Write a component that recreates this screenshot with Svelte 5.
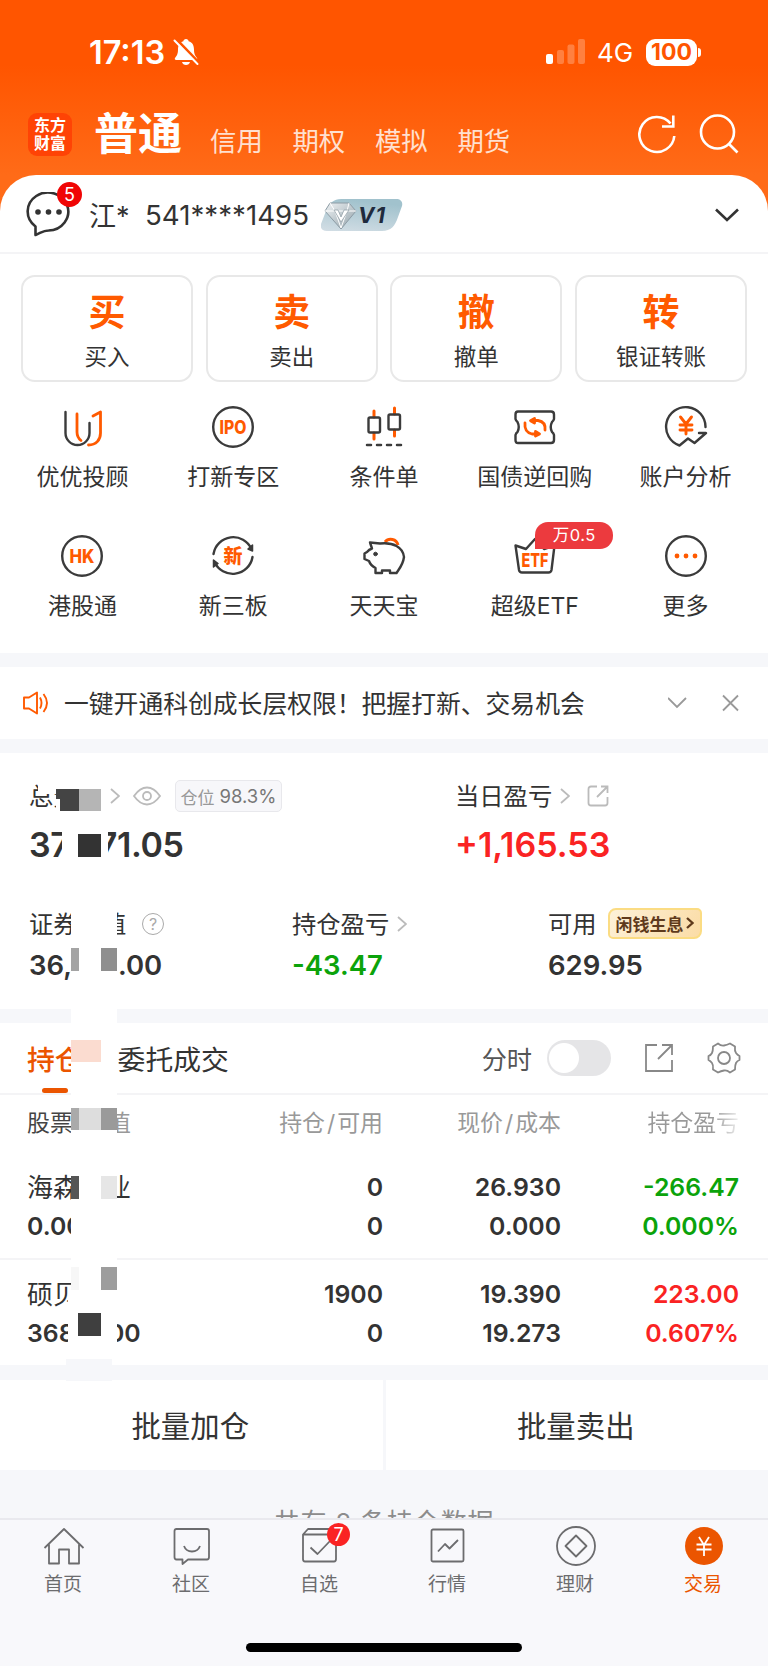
<script>
  let accountTabs = ["信用", "期权", "模拟", "期货"];

  let actions = [
    { mark: "买", name: "买入" },
    { mark: "卖", name: "卖出" },
    { mark: "撤", name: "撤单" },
    { mark: "转", name: "银证转账" },
  ];

  let tools = [
    { icon: "uu", name: "优优投顾" },
    { icon: "ipo", name: "打新专区" },
    { icon: "candle", name: "条件单" },
    { icon: "bond", name: "国债逆回购" },
    { icon: "analysis", name: "账户分析" },
    { icon: "hk", name: "港股通" },
    { icon: "new", name: "新三板" },
    { icon: "pig", name: "天天宝" },
    { icon: "etf", name: "超级ETF", tag: "万0.5" },
    { icon: "more", name: "更多" },
  ];

  let stocks = [
    {
      name: "海森药业",
      value: "0.00",
      hold: "0",
      usable: "0",
      price: "26.930",
      cost: "0.000",
      profit: "-266.47",
      rate: "0.000%",
      trend: "down",
    },
    {
      name: "硕贝德",
      value: "36841.00",
      hold: "1900",
      usable: "0",
      price: "19.390",
      cost: "19.273",
      profit: "223.00",
      rate: "0.607%",
      trend: "up",
    },
  ];

  let navs = [
    { icon: "home", name: "首页" },
    { icon: "chat", name: "社区" },
    { icon: "pick", name: "自选", badge: 7 },
    { icon: "market", name: "行情" },
    { icon: "wealth", name: "理财" },
    { icon: "trade", name: "交易", active: true },
  ];

  // privacy mask: x, y, width, height, colour
  let patches = [
    [38, 753, 63, 36, "#fff"],
    [38, 788, 18, 6, "#fff"],
    [56, 789, 23, 22, "#444"],
    [56, 799, 4, 12, "#fff"],
    [79, 789, 22, 22, "#b5b5b5"],
    [62, 816, 46, 62, "#fff"],
    [78, 834, 23, 23, "#333"],
    [71, 902, 46, 104, "#fff"],
    [71, 948, 8, 23, "#a4a4a4"],
    [101, 948, 16, 23, "#8f8f8f"],
    [71, 1006, 46, 353, "#fff"],
    [71, 1040, 30, 22, "#fbdcd0"],
    [71, 1108, 8, 22, "#aaa"],
    [79, 1108, 22, 22, "#ddd"],
    [101, 1108, 16, 22, "#9a9a9a"],
    [71, 1176, 8, 23, "#555"],
    [101, 1176, 16, 23, "#e6e6e6"],
    [71, 1267, 8, 23, "#f7f7f7"],
    [101, 1267, 16, 23, "#9d9d9d"],
    [68, 1300, 46, 59, "#fff"],
    [78, 1313, 23, 23, "#3f3f3f"],
    [66, 1359, 46, 22, "#f6f7fa"],
  ];
</script>

<div class="phone">
  <header>
    <div class="status">
      <span class="time">17:13</span>
      <svg class="bell" width="26" height="28" viewBox="0 0 26 28">
        <path d="M13 1c1.600 0 2.400 1 2.600 2.200 4 1 5.400 4.300 5.400 8.300 0 5 1.500 6.500 3 8.500.6 1-.1 2-1.200 2H3.200C2.100 22 1.400 21 2 20c1.500-2 3-3.500 3-8.500 0-4 1.400-7.300 5.400-8.300C10.600 2 11.400 1 13 1z" fill="#fff" />
        <path d="M9 24h8c-.5 2-2 3-4 3s-3.500-1-4-3z" fill="#fff" />
        <path d="M3.500 1.500 25.500 24.500" stroke="#ff5500" stroke-width="3" />
        <path d="M1.500 2.500 24.500 26" stroke="#fff" stroke-width="2" stroke-linecap="round" />
      </svg>
      <svg class="signal" width="40" height="26" viewBox="0 0 40 26" fill="#fff">
        <rect x="0" y="15" width="7" height="10" rx="2" />
        <g opacity=".25">
          <rect x="11" y="11" width="7" height="14" rx="2" />
          <rect x="21.500" y="5.500" width="7" height="19.500" rx="2" />
          <rect x="32" y="0" width="7" height="25" rx="2" />
        </g>
      </svg>
      <span class="net">4G</span>
      <span class="battery">100</span>
      <i class="nub"></i>
    </div>

    <div class="titlebar">
      <div class="logo"><span>东方</span><span>财富</span></div>
      <h1>普通</h1>
      <nav>
        {#each accountTabs as tab}
          <span>{tab}</span>
        {/each}
      </nav>
      <svg width="102" height="42" viewBox="0 0 102 42" fill="none" stroke="#fff" stroke-width="2.600">
        <path d="M32.500 10.500A17.500 17.500 0 1 0 36.300 23" />
        <path d="M35.300 2.500V13.500H24" />
        <circle cx="79.500" cy="19" r="16.500" />
        <path d="M91 31l8.500 8.500" />
      </svg>
    </div>
  </header>

  <section class="account">
    <div class="msg">
      <svg width="46" height="46" viewBox="0 0 46 46" fill="none" stroke="#333" stroke-width="2.600" stroke-linejoin="round">
        <path d="M9.500 43V34.500A20.300 19 0 1 1 22.500 38.500C17.500 38.500 15.500 40.500 9.500 43z" />
        <g fill="#333" stroke="none">
          <circle cx="12" cy="20" r="2.800" /><circle cx="22.500" cy="20" r="2.800" /><circle cx="33" cy="20" r="2.800" />
        </g>
      </svg>
      <span class="count">5</span>
    </div>
    <span class="user">江*</span>
    <span class="number">541****1495</span>
    <svg class="vip" width="82" height="32" viewBox="0 0 82 32">
      <defs>
        <linearGradient id="vip" x1="0" y1="1" x2=".3" y2="0">
          <stop offset="0" stop-color="#d3dee5" /><stop offset="1" stop-color="#a1c2cd" />
        </linearGradient>
        <linearGradient id="gem" x1="0" y1="0" x2="1" y2="1">
          <stop offset="0" stop-color="#edf1f3" /><stop offset="1" stop-color="#93a2aa" />
        </linearGradient>
      </defs>
      <path d="M20 0h55c5 0 7 3 6 7l-4 11c-3 9-7 14-16 14H6c-5 0-7-3-6-7L5 12C8 4 13 0 20 0z" fill="url(#vip)" />
      <path d="M9 4h19l7 8-15 18L4 12z" fill="url(#gem)" stroke="#8d9ca5" />
      <path d="M4 12h31M9 4l5 8 6 17 6-17 2-8" fill="none" stroke="#fff" />
      <path d="M13 11h4l3 7 3-7h5l-8 12z" fill="#fff" stroke="#95a2aa" stroke-width=".8" />
      <text x="37" y="24" font-size="22" font-weight="700" font-style="italic" textLength="27" fill="#1f2b3d">V1</text>
    </svg>
    <svg class="down" width="24" height="14" viewBox="0 0 24 14" fill="none" stroke="#333" stroke-width="2.600">
      <path d="M1 1.500 12 12 23 1.500" />
    </svg>
  </section>

  <section class="actions">
    {#each actions as action}
      <button><b>{action.mark}</b><span>{action.name}</span></button>
    {/each}
  </section>

  <section class="tools">
    {#each tools as tool}
      <div class="tool">
        <svg width="44" height="44" viewBox="0 0 44 44" fill="none" stroke="#3b3b3b" stroke-width="2.400" stroke-linecap="round" stroke-linejoin="round">
          {#if tool.icon == "uu"}
            <path d="M5.500 7V28A12 12 0 0 0 29.500 28V18" />
            <g stroke="#ff5a00" stroke-width="2.800"><path d="M17 9V27C17 31 18.500 33.500 21 35.500" /><path d="M33 11 40.500 7V28C40.500 35 36 40 28.500 40" /></g>
          {:else if tool.icon == "ipo"}
            <circle cx="22" cy="22" r="19.800" />
            <text x="22" y="28.800" class="mark" font-size="18.500" textLength="27" lengthAdjust="spacingAndGlyphs">IPO</text>
          {:else if tool.icon == "candle"}
            <path d="M12 6V12M12 28V34M32.500 3V9M32.500 25V31" stroke="#ff5a00" stroke-width="3" />
            <rect x="6.500" y="12.500" width="11.500" height="15" rx="1.500" /><rect x="26.500" y="9.500" width="11.500" height="15" rx="1.500" />
            <path d="M5 40h4M15 40h4M25 40h4M35 40h4" stroke-width="2.500" />
          {:else if tool.icon == "bond"}
            <path d="M5 6.500H38Q41 6.500 41 9.500V14Q40.500 16 39 17Q36.500 22 39 27Q40.500 28 41 30V35Q41 38 38 38H5Q2.500 38 2.500 35V30Q3 28 4.500 27Q7 22 4.500 17Q3 16 2.500 14V9.500Q2.500 6.500 5 6.500z" />
            <g stroke="#ff5a00" stroke-width="2.800"><path d="M20 15.500H25Q33 17 32 25M24 29H19Q11 27 12 18" /><path d="M21.500 13.500 17.500 15.700 21.500 18zM22.500 26.500 26.500 29 22.500 31z" fill="#ff5a00" /></g>
          {:else if tool.icon == "analysis"}
            <path d="M41.500 22A19.700 19.700 0 1 0 15.500 40.500L24 33.500 30.500 38 42 28H35" />
            <path d="M16.500 12 22 19 27.500 12M16 20H28M16 25H28M22 19V29" stroke="#ff5a00" stroke-width="2.900" />
          {:else if tool.icon == "hk"}
            <circle cx="22" cy="22" r="19.800" />
            <text x="22" y="28.500" class="mark" font-size="18.500" textLength="25" lengthAdjust="spacingAndGlyphs">HK</text>
          {:else if tool.icon == "new"}
            <path d="M2.500 20A20 20 0 0 1 40.500 15M41.500 23A20 20 0 0 1 3.500 28" />
            <path d="M41.500 11V17L37 15zM2.500 33V26L7 29.500z" fill="#3b3b3b" stroke-width="1.500" />
            <text x="22" y="28.500" class="mark" font-size="19">新</text>
          {:else if tool.icon == "pig"}
            <path d="M23 8A7.500 7.500 0 0 1 36 11" stroke="#ff5a00" stroke-width="3" stroke-linecap="butt" />
            <path d="M8 8.500 18 9.500C31 8 41 13 42 23 41 31 37 35 34.500 39H28V36.500H20V39H13.500V34C10 32 8 30 7 27L2.500 25V19.500L5 18Q7 15.500 10 14.500z" />
            <circle cx="13.500" cy="20" r="1.800" fill="#3b3b3b" stroke-width="1" />
          {:else if tool.icon == "etf"}
            <path d="M2.500 11.500 13 15 22 5 31 15 41.500 11.500 38.500 36Q38 38.500 35.500 38.500H9Q6.500 38.500 6 36z" />
            <text x="22" y="33" class="mark" font-size="19" textLength="27" lengthAdjust="spacingAndGlyphs">ETF</text>
          {:else}
            <circle cx="22" cy="22" r="19.800" />
            <path d="M13 22h.01M22 22h.01M31 22h.01" stroke="#ff5a00" stroke-width="4.800" />
          {/if}
        </svg>
        <span>{tool.name}</span>
        {#if tool.tag}<em>{tool.tag}</em>{/if}
      </div>
    {/each}
  </section>

  <section class="notice">
    <svg width="26" height="24" viewBox="0 0 26 24" fill="none" stroke="#ff5a00" stroke-width="1.900" stroke-linejoin="round">
      <path d="M1 6.500H6L14 1.500V22.500L6 17.500H1zM17 6.500Q20 12 17 17.500M20.500 3Q27.500 12 20.500 21" />
    </svg>
    <p>一键开通科创成长层权限！把握打新、交易机会</p>
    <svg class="fold" width="72" height="18" viewBox="0 0 72 18" fill="none" stroke="#999" stroke-width="1.800">
      <path d="M0 4 9 13 18 4M55 1.500 70 16.500M70 1.500 55 16.500" />
    </svg>
  </section>

  <section class="assets">
    <div class="total">
      <div>
        <div class="label">
          <span>总资产</span>
          <svg class="arrow" width="10" height="16" viewBox="0 0 10 16"><path d="M1 1 9 8 1 15" /></svg>
          <svg class="eye" width="28" height="20" viewBox="0 0 28 20"><path d="M1 10Q7 1.500 14 1.500T27 10Q21 18.500 14 18.500T1 10z" /><circle cx="14" cy="10" r="4" /></svg>
          <span class="pill">仓位 <i>98.3%</i></span>
        </div>
        <strong class="sum">37,471.05</strong>
      </div>
      <div>
        <div class="label">
          <span>当日盈亏</span>
          <svg class="arrow" width="10" height="16" viewBox="0 0 10 16"><path d="M1 1 9 8 1 15" /></svg>
          <svg class="out" width="22" height="22" viewBox="0 0 22 22"><path d="M10 1.500H4Q1.500 1.500 1.500 4V18Q1.500 20.500 4 20.500H18Q20.500 20.500 20.500 18V12M14 1.500H20.500V8M20 2 10 12" /></svg>
        </div>
        <strong class="up">+1,165.53</strong>
      </div>
    </div>
    <div class="detail">
      <div>
        <div class="label">
          <span>证券市值</span>
          <i class="help">?</i>
        </div>
        <strong>36,841.00</strong>
      </div>
      <div>
        <div class="label">
          <span>持仓盈亏</span>
          <svg class="arrow" width="10" height="16" viewBox="0 0 10 16"><path d="M1 1 9 8 1 15" /></svg>
        </div>
        <strong class="down">-43.47</strong>
      </div>
      <div>
        <div class="label"><span>可用</span><span class="interest">闲钱生息<svg width="8" height="12" viewBox="0 0 8 12"><path d="M1 1 6.500 6 1 11" /></svg></span></div>
        <strong>629.95</strong>
      </div>
    </div>
  </section>

  <section class="positions">
    <div class="tabs">
      <span class="active">持仓</span>
      <span>委托成交</span>
      <span class="minute">分时</span>
      <i class="switch"></i>
      <svg class="share" width="30" height="30" viewBox="0 0 30 30" fill="none" stroke="#888" stroke-width="1.800">
        <path d="M13 2H2V28H28V17M18 2H28V12M28 2 14 16" />
      </svg>
      <svg class="gear" width="34" height="34" viewBox="0 0 34 34" fill="none" stroke="#888" stroke-width="1.800" stroke-linejoin="round">
        <path d="M11 2.500Q14 5 17 4.500T23 2.500L28 5.500Q27.500 10 29 12T32.500 15V19Q30 20 29 22T28 28.500L23 31.500Q20 29 17 29.500T11 31.500L6 28.500Q6.500 24 5 22T1.500 19V15Q4 14 5 12T6 5.500z" />
        <circle cx="17" cy="17" r="6" />
      </svg>
    </div>
    <div class="row head">
      <span><b>股票</b><i>/</i>市值</span>
      <span>持仓<i>/</i>可用</span>
      <span>现价<i>/</i>成本</span>
      <span class="fade">持仓盈亏</span>
    </div>
    {#each stocks as stock}
      <div class="row stock">
        <div><span class="name">{stock.name}</span><span>{stock.value}</span></div>
        <div><span>{stock.hold}</span><span>{stock.usable}</span></div>
        <div><span>{stock.price}</span><span>{stock.cost}</span></div>
        <div class={stock.trend}><span>{stock.profit}</span><span>{stock.rate}</span></div>
      </div>
    {/each}
  </section>

  <section class="batch">
    <button>批量加仓</button>
    <button>批量卖出</button>
  </section>

  <div class="summary">共有 2 条持仓数据</div>

  <footer>
    <nav>
      {#each navs as nav}
        <div class="nav" class:active={nav.active}>
          <svg width="42" height="42" viewBox="0 0 42 42" fill="none" stroke="#6c6c6e" stroke-width="1.800" stroke-linejoin="round">
            {#if nav.icon == "home"}
              <path d="M1.500 23 21 4 40.500 23M6 19.500V38.500H16V24.500H26V38.500H36V19.500" />
            {:else if nav.icon == "chat"}
              <path d="M5.500 4H36Q38 4 38 6V32Q38 34.500 36 34.500H17L11.500 39V34.500H5.500Q3.500 34.500 3.500 32V6Q3.500 4 5.500 4zM13 21Q15 26.500 21 26.500T29 21" />
            {:else if nav.icon == "pick"}
              <path d="M4 9.500 9 4H34L37 9.500V34Q37 36.500 35 36.500H6Q4 36.500 4 34zM4 9.500H37M11.500 22.500 18.500 29 31 16" />
            {:else if nav.icon == "market"}
              <rect x="4.500" y="4.500" width="32" height="32" rx="1.500" /><path d="M11 26.500 18 19 22.500 23.500 31 15" />
            {:else if nav.icon == "wealth"}
              <circle cx="21" cy="21" r="19" /><path d="M21 10.500 31.500 21 21 31.500 10.500 21z" />
            {:else}
              <circle cx="21" cy="21" r="19" fill="#eb5500" stroke="none" />
              <path d="M16 12 21 20 26 12M13.500 19.500H28.500M13.500 24.500H28.500M21 20V31" stroke="#fff" stroke-width="1.800" />
            {/if}
          </svg>
          <span>{nav.name}</span>
          {#if nav.badge}<em>{nav.badge}</em>{/if}
        </div>
      {/each}
    </nav>
    <i class="home-bar"></i>
  </footer>

  <svg class="mask" width="768" height="1666" viewBox="0 0 768 1666" shape-rendering="crispEdges">
    {#each patches as [x, y, width, height, fill]}
      <rect {x} {y} {width} {height} {fill} />
    {/each}
  </svg>
</div>

<style>
  :global(body) {
    background: #f6f7fa;
  }
  .phone {
    position: relative;
    width: 768px;
    height: 1666px;
    overflow: hidden;
    display: flex;
    flex-direction: column;
    background: #f6f7fa;
    color: #333;
    font-family: Inter, "Noto Sans CJK SC", sans-serif;
  }
  .phone > * {
    box-sizing: border-box;
    flex-shrink: 0;
  }
  h1,
  p {
    margin: 0;
  }
  i,
  em {
    font-style: normal;
  }
  svg {
    display: block;
    flex-shrink: 0;
  }
  button {
    padding: 0;
    color: inherit;
    font-family: inherit;
    background: #fff;
    border: none;
  }

  header {
    height: 215px;
    color: #fff;
    background: linear-gradient(#ff5500 0, #ff5500 65px, #ff6b18 175px);
  }
  .status {
    display: flex;
    align-items: center;
    height: 104px;
    padding: 0 67px 0 89px;
    box-sizing: border-box;
  }
  .time {
    width: 84px;
    font-size: 32.500px;
    font-weight: 600;
  }
  .signal {
    margin-left: auto;
  }
  .net {
    margin: 1px 0 0 11px;
    width: 49px;
    font-size: 26px;
  }
  .battery {
    width: 51px;
    height: 27px;
    border-radius: 9px;
    background: #fff;
    color: #ff5500;
    font-size: 23px;
    line-height: 27px;
    font-weight: 700;
    text-align: center;
  }
  .nub {
    width: 3px;
    height: 9px;
    margin-left: 1px;
    border-radius: 0 4px 4px 0;
    background: #fff;
  }
  .titlebar {
    display: flex;
    align-items: center;
    height: 60px;
    padding: 0 28px;
  }
  .logo {
    display: flex;
    flex-direction: column;
    justify-content: center;
    width: 44px;
    height: 43px;
    border-radius: 9px;
    background: #ff4305;
    font-size: 16px;
    line-height: 18px;
    font-weight: 700;
    text-align: center;
  }
  h1 {
    margin: -1px 0 0 22px;
    font-size: 44px;
    line-height: 60px;
    font-weight: 700;
  }
  .titlebar nav {
    display: flex;
    gap: 29.700px;
    margin: 13px auto 0 28px;
    font-size: 26.400px;
    line-height: 30px;
    color: #ffe0d0;
  }

  .account {
    display: flex;
    align-items: center;
    height: 79px;
    margin-top: -40px;
    padding: 2px 29px 0 26px;
    border-bottom: 2px solid #f4f4f6;
    border-radius: 36px 36px 0 0;
    background: #fff;
  }
  .msg {
    position: relative;
    width: 63px;
  }
  .count {
    position: absolute;
    left: 31px;
    top: -10px;
    width: 25px;
    height: 25px;
    border-radius: 50%;
    background: #f00505;
    color: #fff;
    font-size: 18px;
    line-height: 25px;
    text-align: center;
  }
  .user,
  .number {
    font-size: 27.700px;
    white-space: nowrap;
  }
  .user {
    width: 40px;
    font-size: 27px;
  }
  .number {
    margin: 0 12px 0 16px;
  }
  .account .down {
    margin-left: auto;
  }

  .actions {
    display: grid;
    grid-template-columns: repeat(4, 1fr);
    gap: 12.500px;
    padding: 21px 21px 0;
    height: 128px;
    background: #fff;
  }
  .actions button {
    display: flex;
    flex-direction: column;
    align-items: center;
    border: 2px solid #e8e8e8;
    border-radius: 14px;
  }
  .actions b {
    margin-top: 11px;
    color: #ff5a00;
    font-size: 37px;
    line-height: 50px;
    font-weight: 700;
  }
  .actions span {
    margin-top: 4px;
    font-size: 22.500px;
    line-height: 30px;
  }

  .tools {
    display: grid;
    grid-template-columns: repeat(5, 1fr);
    grid-auto-rows: 129px;
    height: 271px;
    padding: 23px 7px 0;
    background: #fff;
  }
  .tool {
    position: relative;
    display: flex;
    flex-direction: column;
    align-items: center;
  }
  .tool span {
    margin-top: 12px;
    font-size: 23px;
    line-height: 32px;
    white-space: nowrap;
  }
  .mark {
    fill: #ff5a00;
    stroke: none;
    font-weight: 800;
    text-anchor: middle;
  }
  .tool em {
    position: absolute;
    left: 76px;
    top: -12px;
    width: 78px;
    height: 27px;
    border-radius: 13px 13px 13px 0;
    background: #ec3a3e;
    color: #fff;
    font-size: 16.500px;
    line-height: 27px;
    text-align: center;
    letter-spacing: 0.500px;
  }

  .notice {
    display: flex;
    align-items: center;
    height: 72px;
    margin-top: 14px;
    padding: 0 28px 0 23px;
    background: #fff;
  }
  .notice p {
    margin: -3px 0 0 15px;
    font-size: 24.800px;
  }
  .fold {
    margin-left: auto;
  }

  .assets {
    height: 256px;
    margin-top: 14px;
    padding: 25px 29px 0;
    background: #fff;
  }
  .total,
  .detail {
    display: grid;
    grid-template-columns: 426px 1fr;
    height: 128px;
  }
  .detail {
    grid-template-columns: 263px 256px 1fr;
  }
  .label {
    display: flex;
    align-items: center;
    height: 36px;
    font-size: 24.300px;
    white-space: nowrap;
  }
  .label > span:first-child {
    margin-top: -3px;
  }
  .assets strong {
    display: block;
    font-size: 34px;
    line-height: 44px;
    margin-top: 9px;
    font-weight: 600;
  }
  .assets .sum {
    letter-spacing: -0.400px;
  }
  .detail strong {
    font-size: 27.500px;
    margin-top: 1px;
  }
  .arrow,
  .eye,
  .out {
    fill: none;
    stroke: #bbb;
    stroke-width: 1.800;
    margin-left: 8px;
  }
  .eye {
    margin-left: 13px;
  }
  .out {
    margin-left: 17px;
  }
  .pill {
    display: flex;
    align-items: center;
    justify-content: center;
    gap: 5px;
    width: 105px;
    height: 30px;
    margin-left: 14px;
    border: 1.500px solid #e8e8ec;
    border-radius: 5px;
    background: #f7f7fa;
    color: #999;
    font-size: 17px;
  }
  .pill i {
    color: #777;
    font-size: 18.500px;
  }
  .help {
    width: 20px;
    height: 20px;
    margin-left: 16px;
    border: 1.800px solid #aaa;
    border-radius: 50%;
    color: #aaa;
    font-size: 16px;
    line-height: 20px;
    text-align: center;
  }
  .interest {
    display: flex;
    align-items: center;
    justify-content: center;
    gap: 2px;
    width: 90px;
    height: 27px;
    margin: -2px 0 0 11px;
    border: 2px solid #fbdc83;
    border-radius: 8px 5px;
    background: linear-gradient(120deg, #fdf1d8, #fbdca6);
    color: #5f3a1c;
    font-size: 17px;
    font-weight: 700;
  }
  .interest svg {
    fill: none;
    stroke: #5f3a1c;
    stroke-width: 2.300;
  }
  .up {
    color: #fa2323;
  }
  .assets .down,
  .stock .down {
    color: #0ba30b;
  }

  .positions {
    height: 342px;
    margin-top: 14px;
    background: #fff;
  }
  .tabs {
    display: flex;
    align-items: center;
    height: 72px;
    padding: 0 27px;
    border-bottom: 2px solid #f4f4f6;
    box-sizing: border-box;
    font-size: 27.800px;
  }
  .tabs span {
    margin-top: -1px;
  }
  .tabs .active {
    position: relative;
    margin-right: 35px;
    color: #eb5500;
    font-weight: 500;
  }
  .tabs .active::after {
    content: "";
    position: absolute;
    left: 15px;
    bottom: -15px;
    width: 26px;
    height: 5px;
    border-radius: 3px;
    background: #eb5500;
  }
  .tabs .minute {
    margin-left: auto;
    font-size: 25.200px;
    color: #555;
  }
  .switch {
    width: 64px;
    height: 36px;
    margin-left: 15px;
    border-radius: 18px;
    background: radial-gradient(circle at 17px 18px, #fff 14.500px, #e5e5e7 15.500px);
  }
  .share {
    margin-left: 33px;
  }
  .gear {
    margin-left: 33px;
  }
  .row {
    display: grid;
    grid-template-columns: 178px 178px 178px 178px;
    padding: 0 29px 0 27px;
    text-align: right;
  }
  .row > :first-child {
    text-align: left;
  }
  .head {
    height: 57px;
    color: #999;
    font-size: 22.900px;
    line-height: 57px;
  }
  .head b {
    color: #444;
    font-weight: 400;
  }
  .head i {
    padding: 0 2px;
  }
  .head .fade {
    color: transparent;
    background: linear-gradient(90deg, #999 85%, #eee) text;
  }
  .stock {
    height: 106px;
    padding-top: 16px;
    box-sizing: border-box;
    font-size: 24.800px;
    line-height: 39px;
    font-weight: 600;
  }
  .stock + .stock {
    padding-top: 15px;
    border-top: 2px solid #f4f4f6;
  }
  .stock span {
    display: block;
  }
  .stock .name {
    height: 39px;
    font-size: 26px;
    font-weight: 400;
  }

  .batch {
    display: grid;
    grid-template-columns: 1fr 1fr;
    gap: 3px;
    height: 90px;
    margin-top: 15px;
  }
  .batch button {
    padding: 0 2px 3px 0;
    font-size: 29.400px;
  }
  .summary {
    height: 48px;
    padding-top: 35px;
    overflow: hidden;
    color: #8c8c8c;
    font-size: 26px;
    line-height: 36px;
    letter-spacing: 0.800px;
    text-align: center;
  }

  footer {
    height: 148px;
    border-top: 2px solid #e9e9ee;
    background: #f8f8fb;
  }
  footer nav {
    display: grid;
    grid-template-columns: repeat(6, 1fr);
    height: 123px;
  }
  .nav {
    position: relative;
    display: flex;
    flex-direction: column;
    align-items: center;
    padding-top: 5px;
    color: #6c6c6e;
    font-size: 19px;
    line-height: 28px;
  }
  .nav span {
    margin: 4px 2px 0 0;
  }
  .nav.active {
    color: #eb5500;
  }
  .nav em {
    position: absolute;
    left: 71px;
    top: 3px;
    width: 23px;
    height: 23px;
    border-radius: 50%;
    background: #fa2323;
    color: #fff;
    font-size: 18px;
    line-height: 23px;
    text-align: center;
  }
  .home-bar {
    display: block;
    width: 276px;
    height: 9px;
    margin: 0 auto;
    border-radius: 5px;
    background: #000;
  }
  .mask {
    position: absolute;
    left: 0;
    top: 0;
    pointer-events: none;
  }
</style>
